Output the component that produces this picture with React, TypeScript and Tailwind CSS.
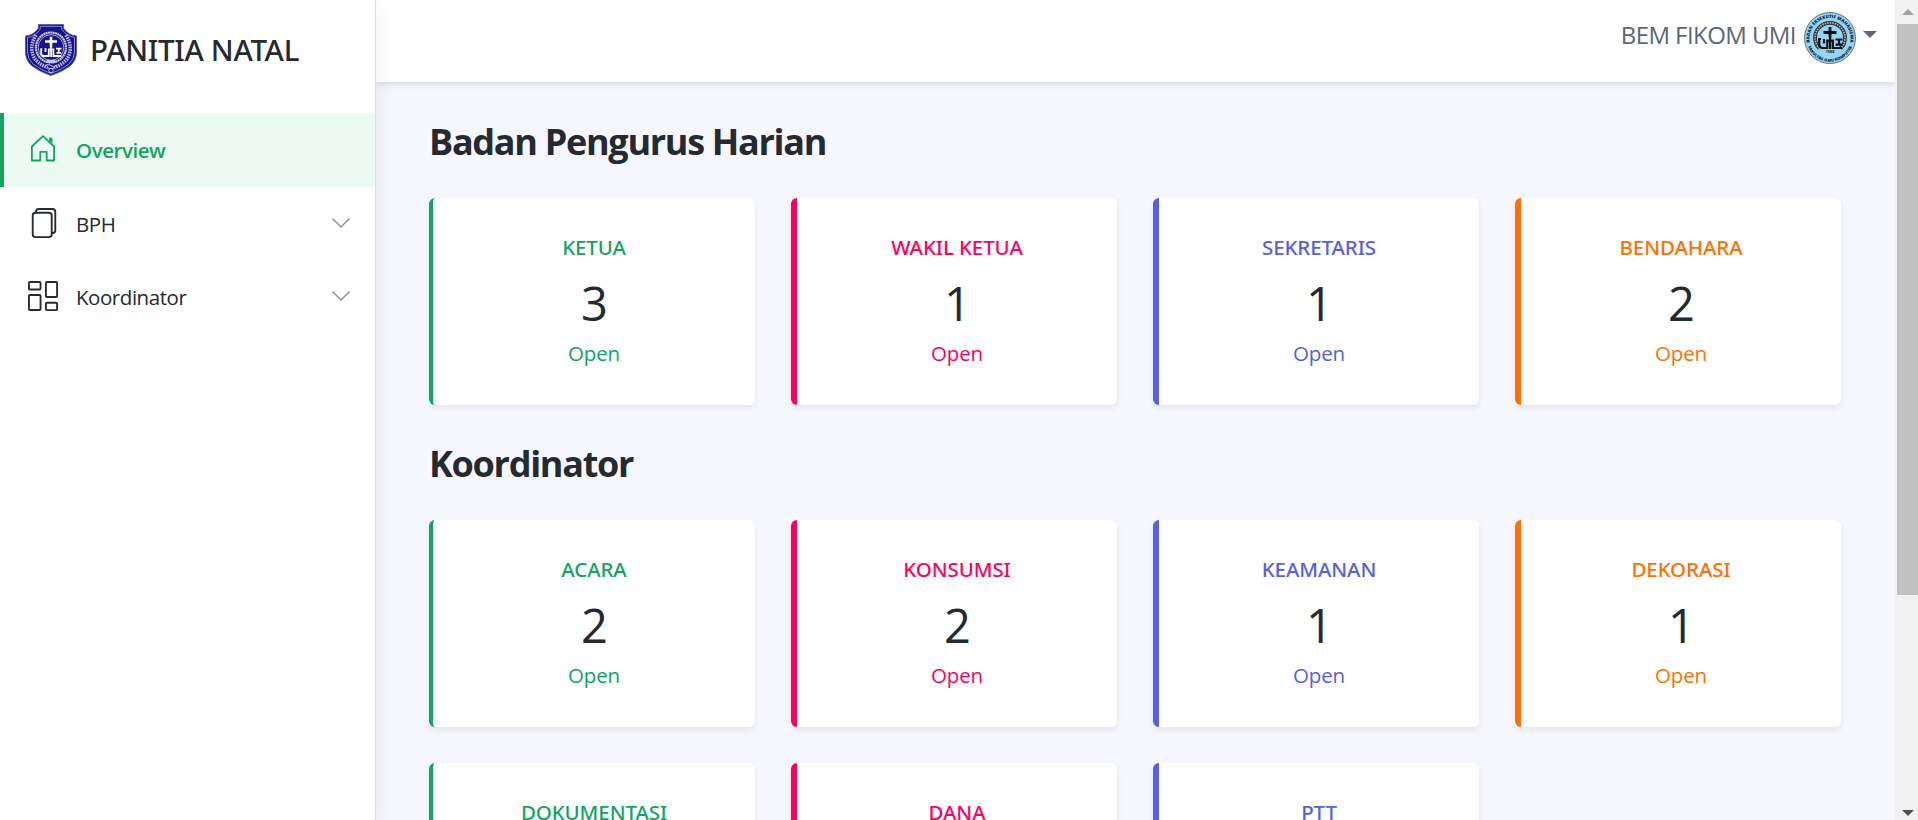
import React from "react";

type Tone = "green" | "pink" | "indigo" | "orange";

const borderTone: Record<Tone, string> = {
  green: "border-l-4 border-[#15a362]",
  pink: "border-l-6 border-[#ff0060]",
  indigo: "border-l-6 border-[#5560e3]",
  orange: "border-l-6 border-[#fd7103]",
};

const textTone: Record<Tone, string> = {
  green: "text-[#15a362]",
  pink: "text-[#ff0060]",
  indigo: "text-[#5560e3]",
  orange: "text-[#fd7103]",
};

interface Stat {
  title: string;
  value: number;
  tone: Tone;
}

const bph: Stat[] = [
  { title: "KETUA", value: 3, tone: "green" },
  { title: "WAKIL KETUA", value: 1, tone: "pink" },
  { title: "SEKRETARIS", value: 1, tone: "indigo" },
  { title: "BENDAHARA", value: 2, tone: "orange" },
];

const koordinator: Stat[] = [
  { title: "ACARA", value: 2, tone: "green" },
  { title: "KONSUMSI", value: 2, tone: "pink" },
  { title: "KEAMANAN", value: 1, tone: "indigo" },
  { title: "DEKORASI", value: 1, tone: "orange" },
  { title: "DOKUMENTASI", value: 1, tone: "green" },
  { title: "DANA", value: 1, tone: "pink" },
  { title: "PTT", value: 1, tone: "indigo" },
];

function StatCard({ title, value, tone }: Stat) {
  return (
    <div
      className={`flex h-[207px] flex-col items-center rounded-md bg-white pt-[35px] shadow-[0_3px_6px_rgba(0,0,0,0.075)] ${borderTone[tone]}`}
    >
      <h4 className={`font-['Noto_Sans','Open_Sans',sans-serif] text-[20.5px] leading-7 font-medium tracking-[-0.005em] ${textTone[tone]}`}>
        {title}
      </h4>
      <div className="mt-[15px] text-[47px] leading-[55px] tracking-[-0.02em] text-[#252930]">{value}</div>
      <div className={`mt-2 text-[20.5px] leading-7 tracking-[-0.01em] ${textTone[tone]}`}>Open</div>
    </div>
  );
}

function Section({ title, items }: { title: string; items: Stat[] }) {
  return (
    <section className="mb-[35px]">
      <h1 className="mb-[33px] pt-px text-[36px] leading-[46px] font-bold tracking-[-0.036em] text-[#252930]">{title}</h1>
      <div className="grid grid-cols-4 gap-9">
        {items.map((s) => (
          <StatCard key={s.title} {...s} />
        ))}
      </div>
    </section>
  );
}

function ShieldLogo() {
  return (
    <svg width="52" height="52" viewBox="0 0 52 52" className="shrink-0">
      <path
        d="M13.5.5h25l.3 4q5 7 12.7 7.500V28q0 8-6 13.500Q37 48 26 51.500 15 48 6.500 41.500.500 36 .500 28V12q7.500-.500 12.700-7.500z"
        fill="#15158b"
        stroke="#5b5bb4"
      />
      <path
        d="M15.300 2.300h21.400l.2 3q5 7 12.600 8.200V28q0 7-5.500 12Q36 46 26 49.500 16 46 8 40 2.500 35 2.500 28V13.500q8-1.200 12.600-8.200z"
        fill="none"
        stroke="#a9a9dc"
        strokeWidth=".8"
      />
      <path d="M11 11q-8 13-1 24 5 6 13 8.500M41 11q8 13 1 24-5 6-13 8.500" fill="none" stroke="#b9b9e3" strokeWidth="3.600" strokeDasharray="1.600 .9" />
      <circle cx="26" cy="23.500" r="15" fill="#15158b" stroke="#c5c5e8" strokeWidth="2.200" strokeDasharray="2 .4" />
      <circle cx="26" cy="23.500" r="12.800" fill="#15158b" stroke="#e8e8f7" strokeWidth=".7" />
      <path d="M26 12.800v10.500M20 17.500h12" stroke="#fff" strokeWidth="2.600" />
      <path
        d="M16.200 24.200v5.300q0 2.500 2.500 2.500H23M20.500 24v4M23.800 33v-7.600h4.600V33M26.100 23v10M28.400 32h8M31 24.600h5.500M33.800 24.600v4.200M31.500 28.800h4.800"
        fill="none"
        stroke="#fff"
        strokeWidth="1.800"
      />
      <path d="M22 36h8l1.500 2.800h-11z" fill="#c9c9ea" />
      <path d="M20.500 41.500q2.700-2.500 5.500 0t5.500 0M23 44q3 2.500 6 0" fill="none" stroke="#c9c9ea" />
      <circle cx="26" cy="46.500" r="2.200" fill="#15158b" stroke="#c9c9ea" />
    </svg>
  );
}

function Avatar() {
  return (
    <svg width="52" height="52" viewBox="0 0 52 52" className="shrink-0">
      <defs>
        <path id="arc-top" d="M5.800 30a20.500 20.500 0 1 1 40.400 0" />
        <path id="arc-bottom" d="M2.300 26a23.700 23.700 0 0 0 47.400 0" />
      </defs>
      <circle cx="26" cy="26" r="25.500" fill="#92d5f7" stroke="#65747c" strokeWidth="1" />
      <text fontSize="4.500" fontWeight="800" fill="#14222a">
        <textPath href="#arc-top" startOffset="50%" textAnchor="middle">
          BADAN EKSEKUTIF MAHASISWA
        </textPath>
      </text>
      <text fontSize="4" fontWeight="800" fill="#14222a">
        <textPath href="#arc-bottom" startOffset="50%" textAnchor="middle">
          FAKULTAS ILMU KOMPUTER
        </textPath>
      </text>
      <path d="M15.500 36.500a15 15 0 1 1 21 0" fill="none" stroke="#2b2f33" strokeWidth="3.800" />
      <path d="M15.500 36.500a15 15 0 1 1 21 0" fill="none" stroke="#b9b5ad" strokeWidth="1.800" strokeDasharray="1.500 1" />
      <path d="M26 15v10.500M19.500 20.500h13" stroke="#0c1114" strokeWidth="2.800" />
      <path
        d="M15.200 27.500v4.500q0 4 4 4H23M14 27h3M20 27v4.500M23.300 37v-8.400h5.600V37M26.100 25v12M29 36h9M31.500 27.500h7M35 27.500v5.200M31.500 32.700h7"
        fill="none"
        stroke="#0c1114"
        strokeWidth="2.200"
      />
      <text x="26" y="41.400" fontSize="3.800" fontWeight="700" textAnchor="middle" fill="#16242c">
        1988
      </text>
    </svg>
  );
}

function HouseIcon() {
  return (
    <svg width="30" height="30" viewBox="0 0 30 30" fill="none" stroke="currentColor" strokeWidth="1.800" strokeLinejoin="round">
      <path d="M3.900 12.500 15 2.100 26.100 12.500V26.500H18.700V17.900H12.300V26.500H3.900z" />
      <path d="M21 3.700h3.500V9.500L21 6.200z" fill="currentColor" stroke="none" />
    </svg>
  );
}

function FilesIcon() {
  return (
    <svg width="30" height="30" viewBox="0 0 30 30" fill="none" stroke="currentColor" strokeWidth="1.850">
      <rect x="4.700" y="4.700" width="19" height="24.400" rx="2.800" />
      <path d="M7.800 4.700q0-3.750 3-3.750h13.500q3 0 3 3v18.300q0 3-3.600 3" />
    </svg>
  );
}

function BlocksIcon() {
  return (
    <svg width="30" height="30" viewBox="0 0 30 30" fill="none" stroke="currentColor" strokeWidth="1.850">
      <rect x=".95" y=".95" width="11.600" height="7.500" rx="1" />
      <rect x=".95" y="14" width="11.600" height="15" rx="1" />
      <rect x="17.900" y=".95" width="11.200" height="15" rx="1" />
      <rect x="17.900" y="21.700" width="11.200" height="7.400" rx="1" />
    </svg>
  );
}

function Chevron() {
  return (
    <svg width="18" height="10" viewBox="0 0 18 10" fill="none" stroke="#828d9f" strokeWidth="1.400" strokeLinecap="round" strokeLinejoin="round">
      <path d="M1 .9 9 8.900 17 .9" />
    </svg>
  );
}

function NavItem({ icon, label, active = false }: { icon: React.ReactNode; label: string; active?: boolean }) {
  return (
    <a
      className={`flex items-center pr-[25px] ${
        active
          ? "h-[74px] border-l-4 border-[#15a362] bg-[#ebfbf4] pl-6 font-semibold text-[#15a362]"
          : "h-[73px] pl-7 text-[#252930]"
      }`}
    >
      <span className="pb-0.5">{icon}</span>
      <span className="ml-[18px] flex-1 text-[20.5px] leading-7 tracking-[-0.022em]">{label}</span>
      {!active && (
        <span className="pb-0.5">
          <Chevron />
        </span>
      )}
    </a>
  );
}

export default function App() {
  return (
    <div className="flex h-[820px] w-[1918px] overflow-hidden bg-[#f5f6fe] font-['Open_Sans','Noto_Sans',sans-serif]">
      <aside className="z-10 flex w-[376px] shrink-0 flex-col border-r border-[#dedfe5] bg-white shadow-[0_6px_22px_rgba(0,0,0,0.07)]">
        <div className="flex h-[113px] items-start pt-6 pl-[25px]">
          <ShieldLogo />
          <span className="ml-[13px] pt-1.5 font-['Noto_Sans','Open_Sans',sans-serif] text-[29.5px] leading-10 font-medium tracking-[-0.01em] text-[#252930]">
            PANITIA NATAL
          </span>
        </div>
        <nav className="flex flex-col">
          <NavItem active icon={<HouseIcon />} label="Overview" />
          <NavItem icon={<FilesIcon />} label="BPH" />
          <NavItem icon={<BlocksIcon />} label="Koordinator" />
        </nav>
      </aside>

      <div className="flex h-[820px] w-[1519px] shrink-0 flex-col">
        <header className="flex h-[82px] shrink-0 items-start justify-end bg-white pt-3 pr-[18px] shadow-[0_3px_6px_rgba(0,0,0,0.1)]">
          <span className="mr-2 pt-[7px] text-[24px] leading-8 tracking-[-0.024em] text-[#5d6778]">BEM FIKOM UMI</span>
          <Avatar />
          <svg width="14" height="7" viewBox="0 0 14 7" className="mt-[19px] ml-[7px] shrink-0">
            <path d="M0 0h14L7 7z" fill="#5d6778" />
          </svg>
        </header>
        <main className="min-h-0 flex-1 overflow-hidden pt-9 pr-[54px] pl-[53px]">
          <Section title="Badan Pengurus Harian" items={bph} />
          <Section title="Koordinator" items={koordinator} />
        </main>
      </div>

      <div className="flex w-[23px] shrink-0 flex-col items-end bg-[#f1f1f1]">
        <div className="flex h-6 w-[21px] items-center justify-center">
          <svg width="12" height="6" viewBox="0 0 12 6">
            <path d="M0 6h12L6 0z" fill="#a3a3a3" />
          </svg>
        </div>
        <div className="h-[571px] w-[21px] bg-[#c1c1c1]" />
        <div className="mt-auto flex h-[14px] w-[21px] items-center justify-center">
          <svg width="12" height="6" viewBox="0 0 12 6">
            <path d="M0 0h12L6 6z" fill="#505050" />
          </svg>
        </div>
      </div>
    </div>
  );
}
